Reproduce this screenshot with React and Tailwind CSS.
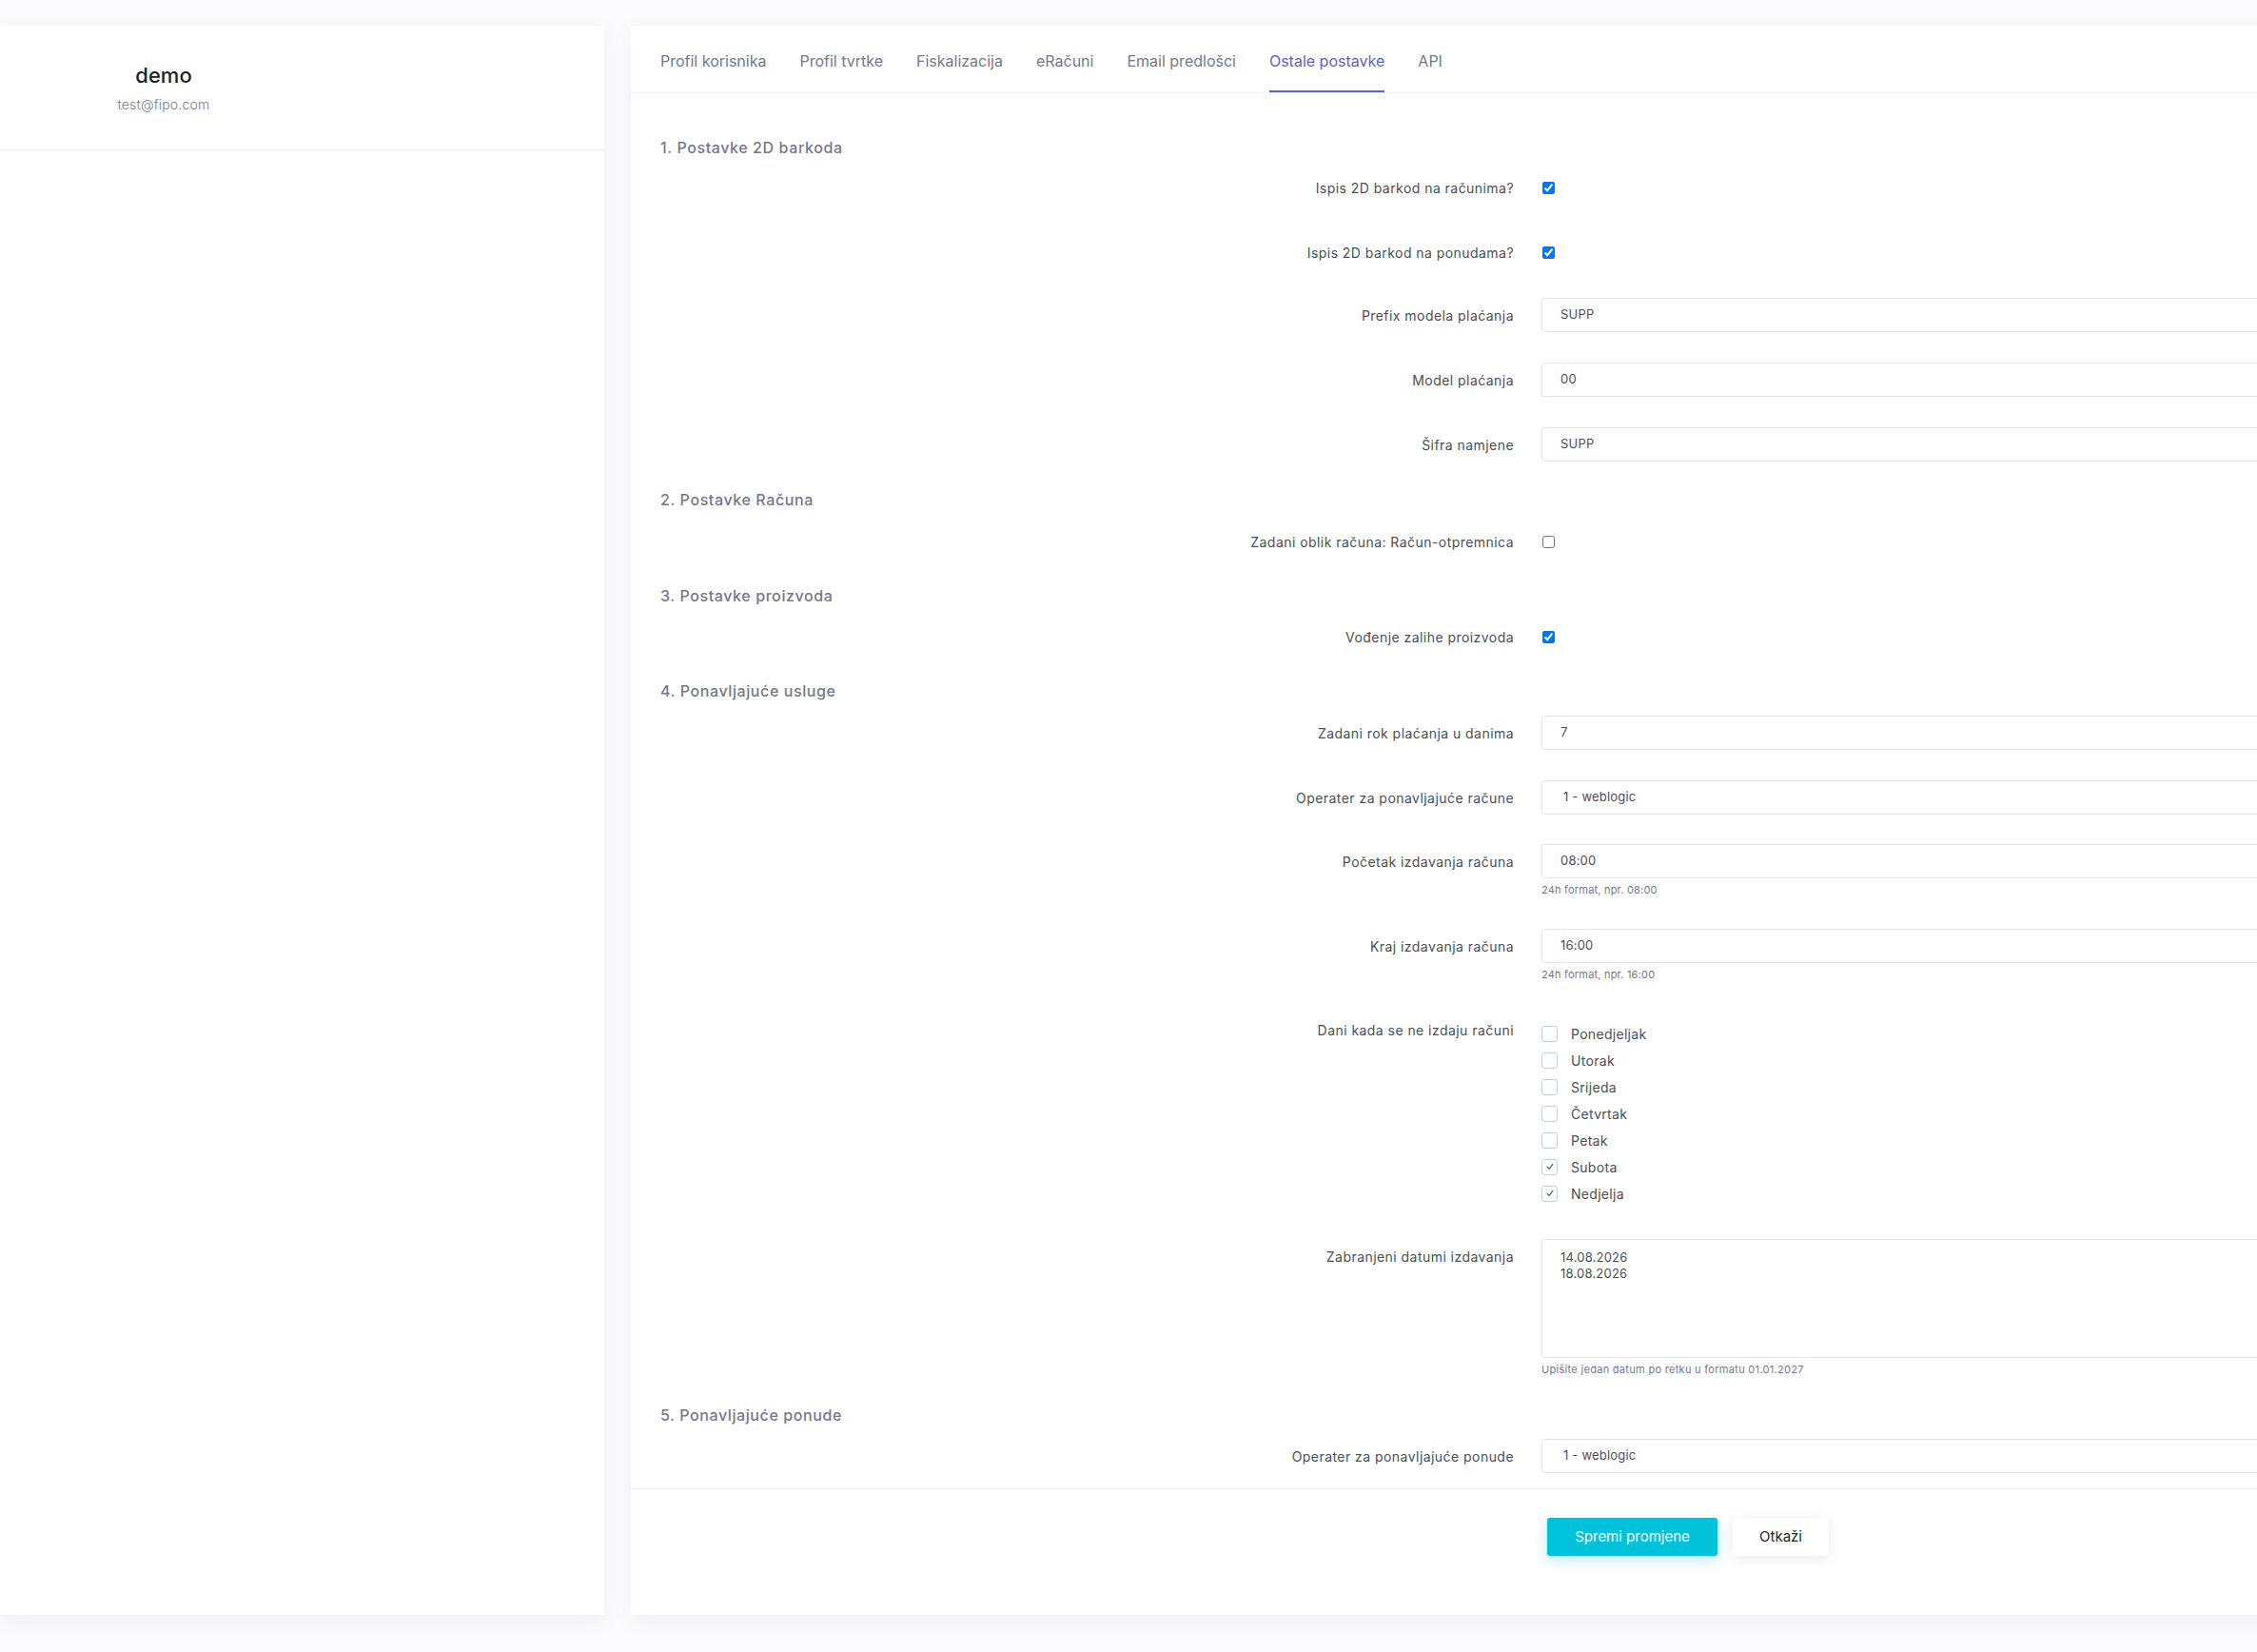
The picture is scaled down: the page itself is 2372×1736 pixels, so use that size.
import React from "react";

const tabs = [
  "Profil korisnika",
  "Profil tvrtke",
  "Fiskalizacija",
  "eRačuni",
  "Email predlošci",
  "Ostale postavke",
  "API",
];

const days = [
  { name: "Ponedjeljak", on: false },
  { name: "Utorak", on: false },
  { name: "Srijeda", on: false },
  { name: "Četvrtak", on: false },
  { name: "Petak", on: false },
  { name: "Subota", on: true },
  { name: "Nedjelja", on: true },
];

function Heading({ children, className }) {
  return (
    <h5 className={"h-[24px] text-[16px] leading-[24px] font-medium tracking-[0.6px] text-[#74788d] " + className}>
      {children}
    </h5>
  );
}

function Label({ children, className = "" }) {
  return (
    <label className={"w-[897px] shrink-0 text-right text-[14px] tracking-[0.45px] text-[#495057] " + className}>
      {children}
    </label>
  );
}

function CheckRow({ label, checked, className }) {
  return (
    <div className={"flex h-[24px] items-center gap-[29px] " + className}>
      <Label>{label}</Label>
      <input
        type="checkbox"
        defaultChecked={checked}
        className="ml-[1px] h-[13px] w-[13px]"
      />
    </div>
  );
}

function Field({ label, value, className, select = false }) {
  return (
    <div className={"flex h-[36px] items-center gap-[29px] " + className}>
      <Label>{label}</Label>
      <div
        className={
          "flex h-[36px] flex-1 items-center rounded-[3px] border border-[#e4e6ec] bg-white text-[13px] tracking-[0.2px] text-[#495057] " +
          (select ? "pl-[22px]" : "pl-[19px]")
        }
      >
        {value}
      </div>
    </div>
  );
}

function FieldHelp({ label, value, help, className }) {
  return (
    <div className={"flex items-start gap-[29px] " + className}>
      <Label className="flex h-[36px] items-center justify-end">{label}</Label>
      <div className="flex-1">
        <div className="flex h-[36px] items-center rounded-[3px] border border-[#e4e6ec] bg-white pl-[19px] text-[13px] tracking-[0.2px] text-[#495057]">
          {value}
        </div>
        <p className="mt-[5px] h-[14px] text-[11px] leading-[14px] tracking-[0.2px] text-[#74788d]">{help}</p>
      </div>
    </div>
  );
}

function DayBox({ on }) {
  return (
    <span className="flex h-[17px] w-[17px] items-center justify-center rounded-[3px] border border-[#c9ced6] bg-white">
      {on && (
        <svg viewBox="0 0 12 12" className="h-[10px] w-[10px]">
          <path d="M2.5 6.3 L5 8.8 L9.5 2.8" fill="none" stroke="#5a6179" strokeWidth="1.4" strokeLinecap="round" strokeLinejoin="round" />
        </svg>
      )}
    </span>
  );
}

export default function App() {
  return (
    <div className="min-h-[1736px] w-full overflow-hidden bg-[#fbfbfd] pt-[27px] font-['Inter',sans-serif]">
      <div className="flex items-start gap-[28px]">
        {/* profile card */}
        <aside className="h-[1670px] w-[635px] shrink-0 bg-white shadow-[0_6px_22px_rgba(60,60,130,0.06)]">
          <div className="flex h-[130px] w-[344px] flex-col items-center pt-[39px]">
            <h4 className="text-[22px] leading-[26px] font-medium text-[#1f2326]">demo</h4>
            <p className="mt-[8px] text-[14px] leading-[20px] font-light tracking-[0.2px] text-[#74788d]">test@fipo.com</p>
          </div>
          <div className="border-b border-[#eff0f4]" />
        </aside>

        {/* settings card */}
        <main className="h-[1670px] w-[1900px] shrink-0 bg-white shadow-[0_6px_22px_rgba(60,60,130,0.06)]">
          <nav className="flex h-[71px] gap-[35px] border-b border-[#eff0f4] pl-[31px]">
            {tabs.map((t) => {
              const active = t === "Ostale postavke";
              return (
                <span
                  key={t}
                  className={
                    "flex items-center pt-[6px] text-[16px] " +
                    (active
                      ? "border-b-2 border-[#5c64c6] text-[#5c64c6]"
                      : "border-b-2 border-transparent text-[#74788d]")
                  }
                >
                  {t}
                </span>
              );
            })}
          </nav>

          <div className="pl-[31px] pb-[16px]">
            <Heading className="mt-[45px]">1. Postavke 2D barkoda</Heading>
            <CheckRow className="mt-[18px]" label="Ispis 2D barkod na računima?" checked />
            <CheckRow className="mt-[44px]" label="Ispis 2D barkod na ponudama?" checked />
            <Field className="mt-[36px]" label="Prefix modela plaćanja" value="SUPP" />
            <Field className="mt-[32px]" label="Model plaćanja" value="00" />
            <Field className="mt-[32px]" label="Šifra namjene" value="SUPP" />

            <Heading className="mt-[28px]">2. Postavke Računa</Heading>
            <CheckRow className="mt-[20px]" label="Zadani oblik računa: Račun-otpremnica" checked={false} />

            <Heading className="mt-[33px]">3. Postavke proizvoda</Heading>
            <CheckRow className="mt-[19px]" label="Vođenje zalihe proizvoda" checked />

            <Heading className="mt-[33px]">4. Ponavljajuće usluge</Heading>
            <Field className="mt-[14px]" label="Zadani rok plaćanja u danima" value="7" />
            <Field className="mt-[32px]" label="Operater za ponavljajuće račune" value="1 - weblogic" select />
            <FieldHelp className="mt-[31px]" label="Početak izdavanja računa" value="08:00" help="24h format, npr. 08:00" />
            <FieldHelp className="mt-[34px]" label="Kraj izdavanja računa" value="16:00" help="24h format, npr. 16:00" />

            <div className="mt-[41px] flex items-start gap-[29px]">
              <Label className="leading-[22px]">Dani kada se ne izdaju računi</Label>
              <div className="flex flex-col">
                {days.map((d) => (
                  <div key={d.name} className="flex h-[28px] items-center gap-[14px]">
                    <DayBox on={d.on} />
                    <span className="text-[14px] tracking-[0.3px] text-[#495057]">{d.name}</span>
                  </div>
                ))}
              </div>
            </div>

            <div className="mt-[34px] flex items-start gap-[29px]">
              <Label className="pt-[9px] leading-[20px]">Zabranjeni datumi izdavanja</Label>
              <div className="flex-1">
                <div className="h-[125px] rounded-[3px] border border-[#e4e6ec] bg-white pl-[19px] pt-[10px] text-[13px] leading-[17px] tracking-[0.2px] text-[#495057]">
                  <div>14.08.2026</div>
                  <div>18.08.2026</div>
                </div>
                <p className="mt-[5px] h-[14px] text-[11px] leading-[14px] tracking-[0.3px] text-[#74788d]">
                  Upišite jedan datum po retku u formatu 01.01.2027
                </p>
              </div>
            </div>

            <Heading className="mt-[29px]">5. Ponavljajuće ponude</Heading>
            <Field className="mt-[13px]" label="Operater za ponavljajuće ponude" value="1 - weblogic" select />
          </div>

          <div className="flex gap-[16px] border-t border-[#eff0f4] pt-[30px] pl-[963px]">
            <button className="h-[40px] w-[179px] rounded-[3px] bg-[#00c3db] text-[15px] text-white shadow-[0_4px_14px_rgba(0,195,219,0.3)]">
              Spremi promjene
            </button>
            <button className="h-[40px] w-[101px] rounded-[3px] bg-white text-[15px] text-[#212529] shadow-[0_2px_14px_rgba(80,80,140,0.13)]">
              Otkaži
            </button>
          </div>
        </main>
      </div>
    </div>
  );
}
